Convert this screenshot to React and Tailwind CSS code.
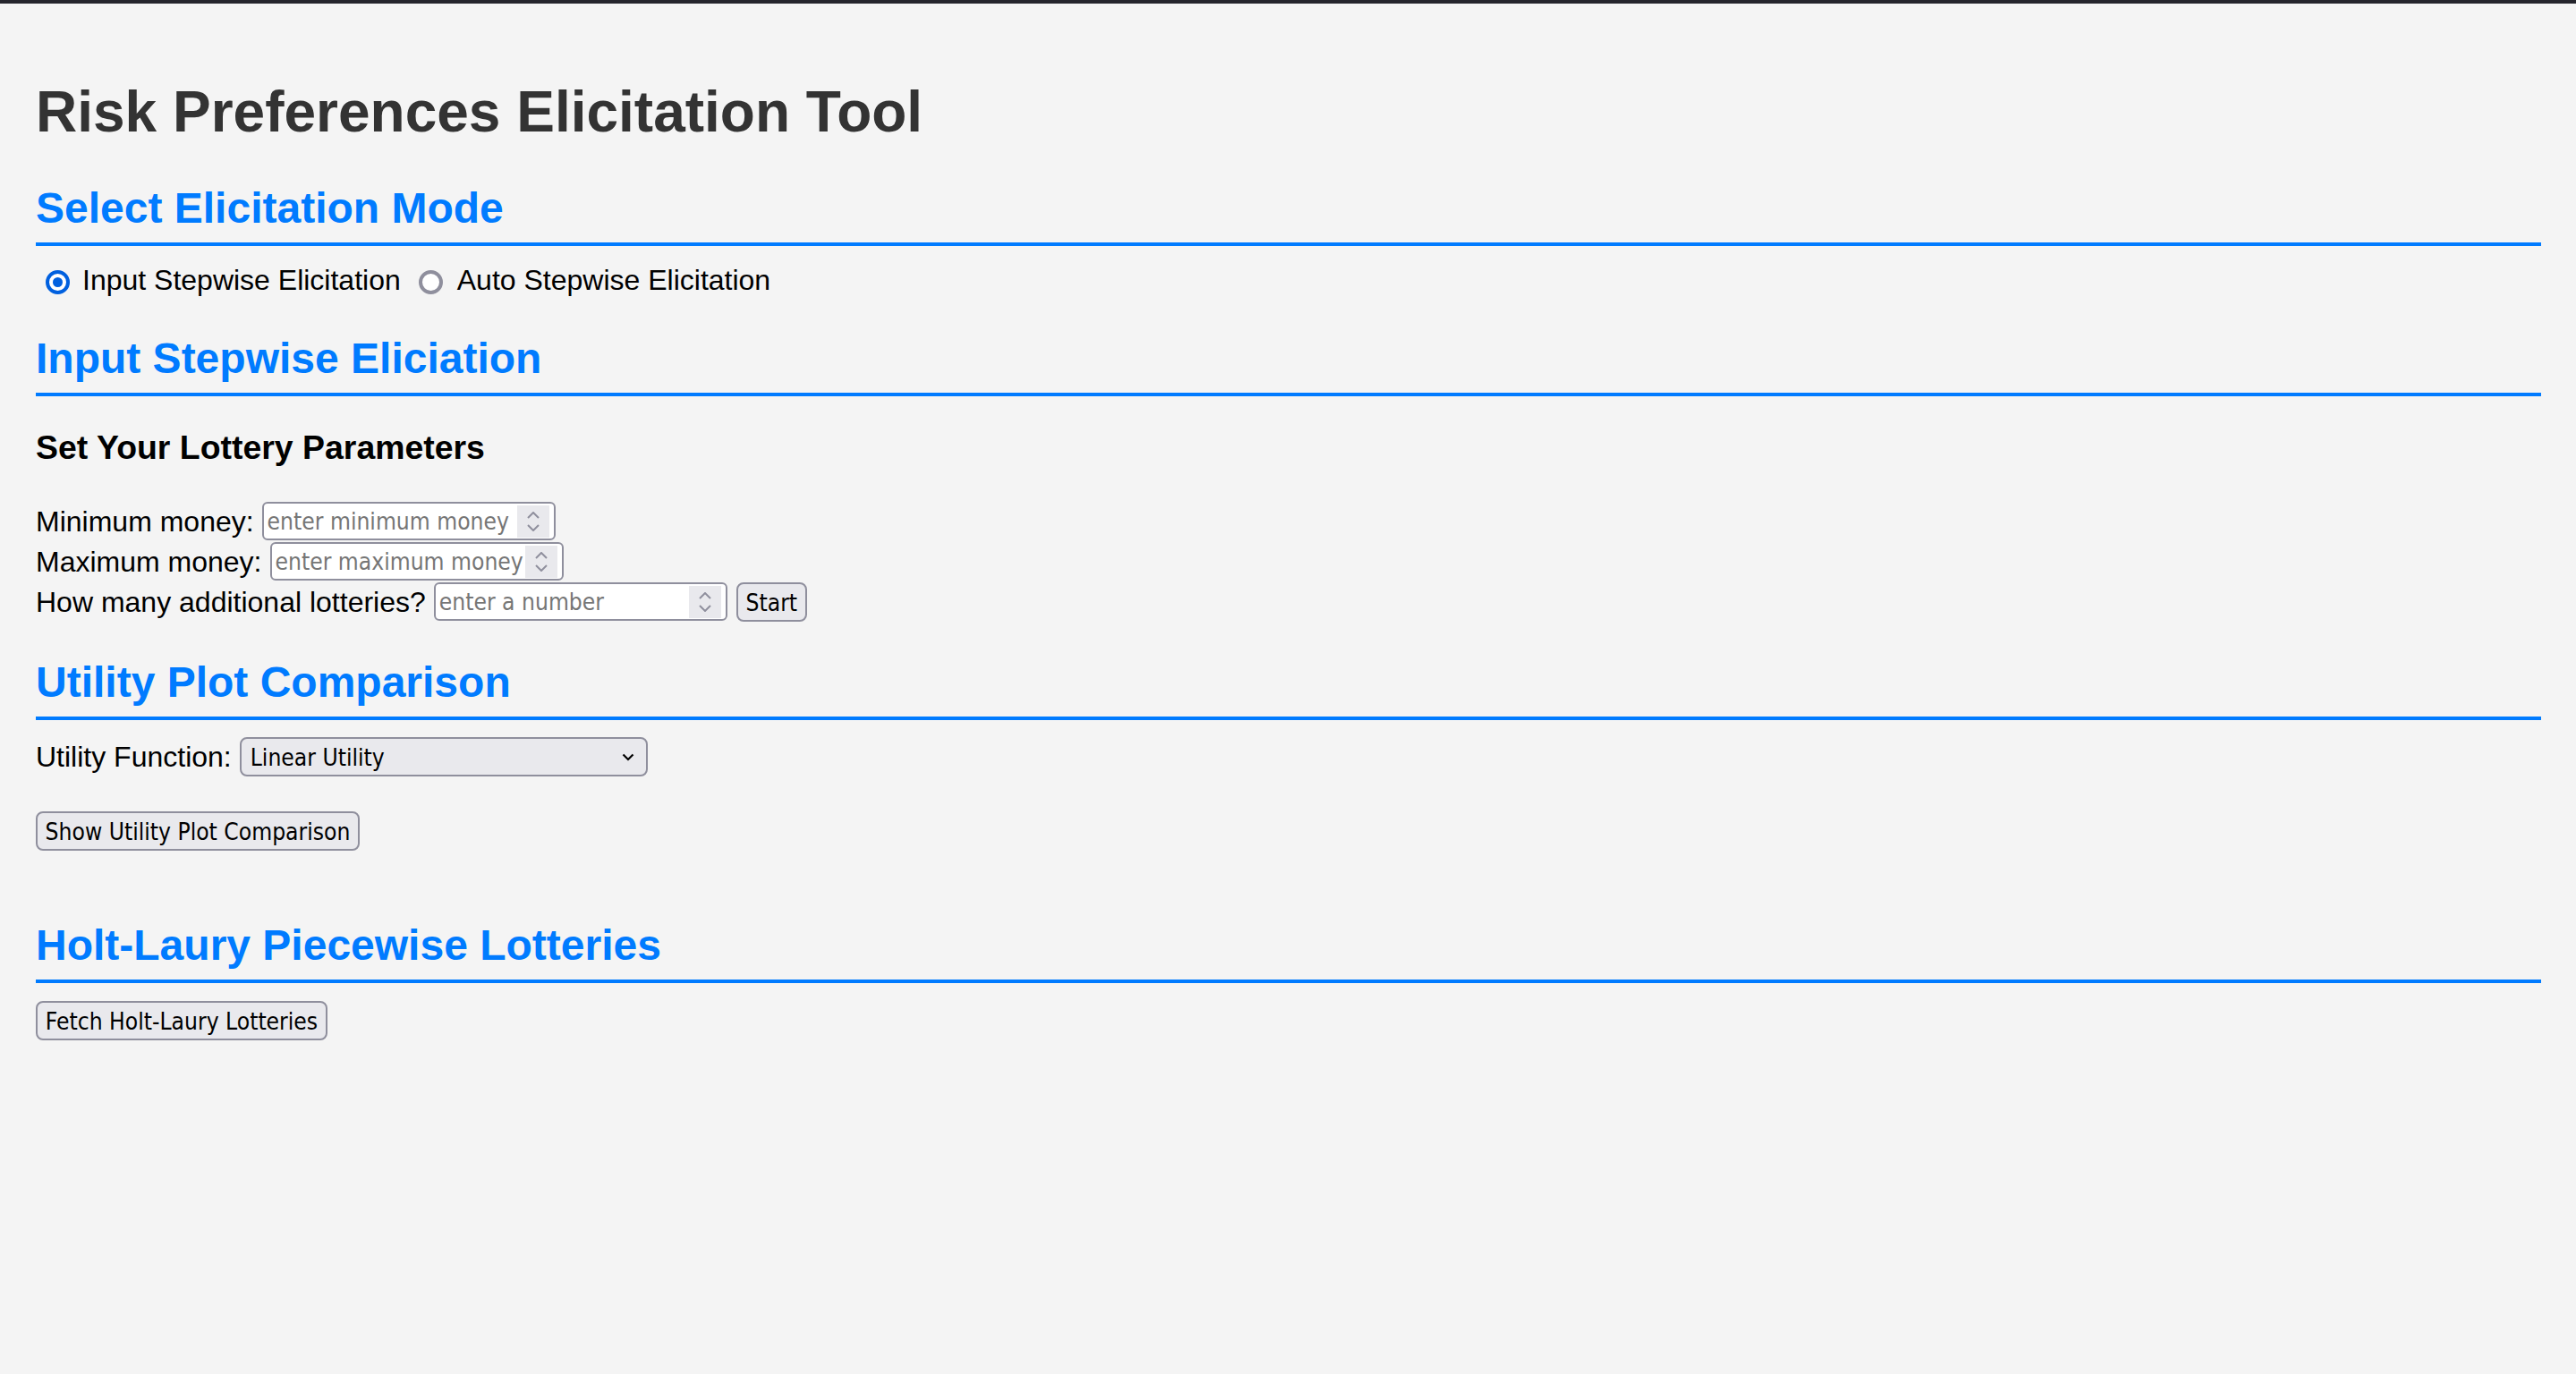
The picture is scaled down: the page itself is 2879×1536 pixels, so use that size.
import { useState } from 'react'

const CTRL = "font-['DejaVu_Sans_Condensed','DejaVu_Sans',sans-serif] font-stretch-condensed text-[26.2px] text-black"

function Radio({ checked, onClick }) {
  return (
    <span
      onClick={onClick}
      className={`w-[27px] h-[27px] shrink-0 rounded-full border-[4px] bg-white flex items-center justify-center cursor-pointer ${checked ? 'border-[#0060df]' : 'border-[#8f8f9d]'}`}
    >
      {checked && <span className="w-[11px] h-[11px] rounded-full bg-[#0060df]" />}
    </span>
  )
}

function Spinner() {
  return (
    <div className="w-[36px] h-[36px] shrink-0 bg-[#e9e9ed] flex flex-col items-center justify-center gap-[6px]">
      <svg width="14" height="8" viewBox="0 0 14 8" fill="none">
        <path d="M1 7L7 1L13 7" stroke="#8f8f9d" strokeWidth="2" />
      </svg>
      <svg width="14" height="8" viewBox="0 0 14 8" fill="none">
        <path d="M1 1L7 7L13 1" stroke="#8f8f9d" strokeWidth="2" />
      </svg>
    </div>
  )
}

function NumberField({ placeholder }) {
  return (
    <div className="ml-[9px] w-[328px] h-[43px] flex items-center border-2 border-[#8f8f9d] rounded-[6px] bg-white pl-[4px] pr-[5px]">
      <input
        type="text"
        inputMode="numeric"
        placeholder={placeholder}
        className={`${CTRL} flex-1 min-w-0 bg-transparent outline-none placeholder:text-[#767676]`}
      />
      <Spinner />
    </div>
  )
}

function Section({ title, className = '' }) {
  return (
    <h2 className={`text-[48px] leading-[55px] font-bold text-[#007bff] pb-[11px] border-b-4 border-[#007bff] ${className}`}>
      {title}
    </h2>
  )
}

function Btn({ children, className = '' }) {
  return (
    <button className={`${CTRL} h-[44px] pt-[3px] border-2 border-[#8f8f9d] rounded-[8px] bg-[#e9e9ed] flex items-center justify-center ${className}`}>
      {children}
    </button>
  )
}

export default function App() {
  const [mode, setMode] = useState('input')

  return (
    <div className="min-h-screen bg-[#f4f4f4] font-['Liberation_Sans',Arial,sans-serif] text-black">
      <div className="h-[4px] bg-[#25252d]" />
      <div className="pl-[40px] pr-[39px] pb-[40px]">
        <h1 className="mt-[85px] text-[64px] leading-[72px] font-bold text-[#333333]">
          Risk Preferences Elicitation Tool
        </h1>

        <Section title="Select Elicitation Mode" className="mt-[44px]" />
        <div className="mt-[20px] h-[36px] flex items-center text-[32px] leading-[36px]">
          <span className="ml-[11px] mt-[4px]">
            <Radio checked={mode === 'input'} onClick={() => setMode('input')} />
          </span>
          <span className="ml-[14px]">Input Stepwise Elicitation</span>
          <span className="ml-[20px] mt-[4px]">
            <Radio checked={mode === 'auto'} onClick={() => setMode('auto')} />
          </span>
          <span className="ml-[16px]">Auto Stepwise Elicitation</span>
        </div>

        <Section title="Input Stepwise Eliciation" className="mt-[42px]" />
        <h3 className="mt-[36px] text-[37.44px] leading-[43px] font-bold text-black">
          Set Your Lottery Parameters
        </h3>

        <div className="mt-[38px] text-[32px] leading-[36px]">
          <div className="h-[45px] flex items-center">
            <span>Minimum money:</span>
            <NumberField placeholder="enter minimum money" />
          </div>
          <div className="h-[45px] flex items-center">
            <span>Maximum money:</span>
            <NumberField placeholder="enter maximum money" />
          </div>
          <div className="h-[45px] flex items-center">
            <span>How many additional lotteries?</span>
            <NumberField placeholder="enter a number" />
            <Btn className="ml-[10px] w-[79px] h-[43px]">Start</Btn>
          </div>
        </div>

        <Section title="Utility Plot Comparison" className="mt-[40px]" />
        <div className="mt-[18px] h-[45px] flex items-center text-[32px] leading-[36px]">
          <span>Utility Function:</span>
          <div className="relative ml-[9px] w-[456px] h-[44px]">
            <select
              defaultValue="linear"
              className={`${CTRL} appearance-none w-full h-full border-2 border-[#8f8f9d] rounded-[8px] bg-[#e9e9ed] pl-[10px] pt-[2px] outline-none`}
            >
              <option value="linear">Linear Utility</option>
              <option value="crra">CRRA Utility</option>
              <option value="cara">CARA Utility</option>
            </select>
            <svg
              className="pointer-events-none absolute right-[15px] top-[18px]"
              width="14" height="9" viewBox="0 0 14 9" fill="none"
            >
              <path d="M1.5 1.5L7 7L12.5 1.5" stroke="#000" strokeWidth="2.2" />
            </svg>
          </div>
        </div>

        <Btn className="mt-[39px] w-[362px]">Show Utility Plot Comparison</Btn>

        <Section title="Holt-Laury Piecewise Lotteries" className="mt-[78px]" />
        <Btn className="mt-[20px] w-[326px]">Fetch Holt-Laury Lotteries</Btn>
      </div>
    </div>
  )
}
